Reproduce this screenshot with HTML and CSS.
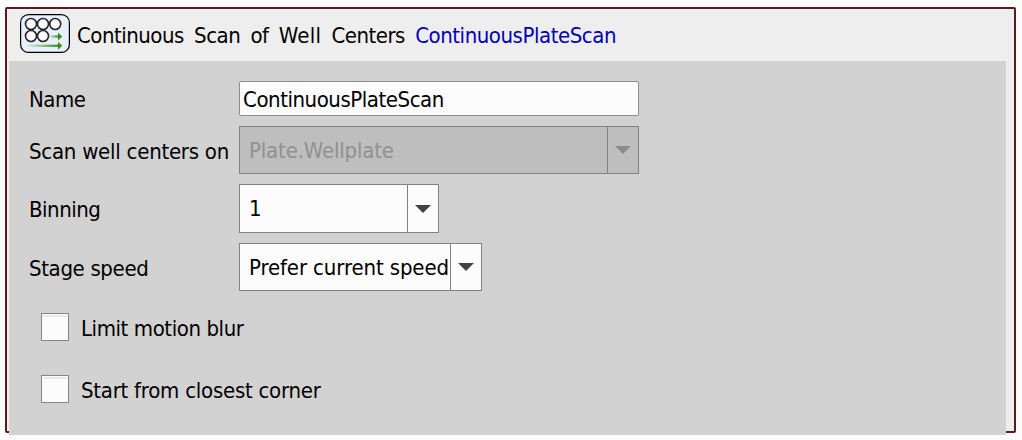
FILE: index.html
```html
<!DOCTYPE html>
<html lang="en">
<head>
<meta charset="utf-8">
<title>Continuous Scan of Well Centers</title>
<link rel="stylesheet" href="styles.css">
</head>
<body>
<section class="panel">
  <header class="panel-header">
    <svg class="icon" width="50" height="39" viewBox="0 0 50 39">
      <defs>
        <linearGradient id="fade" x1="0" x2="1" y1="0" y2="0">
          <stop offset="0" stop-color="#4a9a20" stop-opacity="0"/>
          <stop offset="1" stop-color="#3f8f18"/>
        </linearGradient>
      </defs>
      <rect x=".6" y=".6" width="48.8" height="37.8" rx="8" fill="#e8effd" stroke="#000" stroke-width="1.2"/>
      <g fill="#fff" stroke="#262626" stroke-width="1.6">
        <circle cx="11" cy="10" r="5.5"/><circle cx="23" cy="10" r="5.5"/><circle cx="35.2" cy="10" r="5.5"/>
        <circle cx="11" cy="22" r="5.5"/><circle cx="23" cy="22" r="5.5"/>
      </g>
      <rect x="28.5" y="21.3" width="10" height="2.4" fill="url(#fade)"/>
      <path d="M38 18.5L42.3 22.5L38 26.5Z" fill="#3f8f18"/>
      <rect x="5" y="30.6" width="34" height="2.4" fill="url(#fade)"/>
      <path d="M38 27.8L42.3 31.8L38 35.8Z" fill="#3f8f18"/>
    </svg>
    <h1 class="title"><span class="kind">Continuous Scan of <span class="well">Well</span> Centers</span> <span class="instance">ContinuousPlateScan</span></h1>
  </header>
  <form class="panel-body">
    <div class="row">
      <label class="label">Name</label>
      <div class="input">ContinuousPlateScan</div>
    </div>
    <div class="row">
      <label class="label label-plate">Scan well centers on</label>
      <div class="combo plate disabled"><span class="value">Plate.Wellplate</span><span class="drop"><svg width="16" height="8" viewBox="0 0 16 8"><path d="M0 0H16L8 8Z"/></svg></span></div>
    </div>
    <div class="row">
      <label class="label">Binning</label>
      <div class="combo binning"><span class="value">1</span><span class="drop"><svg width="16" height="8" viewBox="0 0 16 8"><path d="M0 0H16L8 8Z"/></svg></span></div>
    </div>
    <div class="row">
      <label class="label label-speed">Stage speed</label>
      <div class="combo speed"><span class="value">Prefer current speed</span><span class="drop"><svg width="16" height="8" viewBox="0 0 16 8"><path d="M0 0H16L8 8Z"/></svg></span></div>
    </div>
    <div class="check"><span class="box"></span><span class="check-text blur">Limit motion blur</span></div>
    <div class="check"><span class="box"></span><span class="check-text corner">Start from closest corner</span></div>
  </form>
</section>
</body>
</html>
```
FILE: styles.css
```css
* { box-sizing: border-box; }
body {
  margin: 0;
  padding: 7px 6px 0 5px;
  height: 440px;
  overflow: hidden;
  background: #fcfcfc;
  color: #000;
  font: 22px/28px "DejaVu Sans Condensed", "DejaVu Sans", sans-serif;
  font-stretch: condensed;
  letter-spacing: -0.5px;
  white-space: nowrap;
}
.panel {
  height: 426px;
  border: 2px solid #5a1a1e;
  border-radius: 2px;
  background: #eee;
}
.panel-header {
  display: flex;
  height: 52px;
  padding: 5px 0 0 13px;
  gap: 7px;
}
.icon { flex: none; display: block; }
.title {
  margin: 0;
  padding-top: 8px;
  font: inherit;
  word-spacing: 4.5px;
}
.well { letter-spacing: 0.2px; }
.instance { color: #0000b4; letter-spacing: -0.45px; }
.panel-body {
  width: 997px;
  height: 374px;
  margin-left: 2px;
  padding: 20px 0 0 20px;
  background: #d2d2d2;
}
.row {
  display: grid;
  grid-template-columns: 210px max-content;
  margin-bottom: 10px;
  align-items: center;
}
.label { padding-top: 2px; }
.label-plate { padding-top: 4px; letter-spacing: -0.25px; }
.label-speed { padding-top: 4px; letter-spacing: -0.35px; }
.input {
  width: 400px;
  height: 35px;
  padding: 4px 3px;
  border: 1px solid #8e8e8e;
  border-radius: 2px;
  background: #fcfcfc;
  letter-spacing: -0.45px;
}
.combo {
  display: grid;
  grid-template-columns: 1fr 32px;
  height: 48px;
  border: 1px solid #828282;
  background: #fcfcfc;
}
.combo { grid-template-columns: 1fr 31px; }
.value { padding: 10px 0 0 9px; }
.drop {
  display: flex;
  align-items: center;
  justify-content: center;
  border-left: 1px solid #828282;
  fill: #424242;
}
.drop svg { display: block; }
.plate { width: 400px; letter-spacing: -0.17px; }
.binning { width: 200px; height: 49px; }
.speed { width: 243px; letter-spacing: -0.12px; }
.disabled { background: #bebebe; color: #919191; }
.disabled .drop { fill: #8c8c8c; }
.check {
  display: flex;
  align-items: center;
  gap: 12px;
  height: 28px;
  margin: 22px 0 0 12px;
}
.check + .check { margin-top: 34px; }
.box {
  width: 28px;
  height: 28px;
  border: 1px solid #858585;
  background: linear-gradient(#e9e9e9, #e9e9e9) center 1px / 24px 2px no-repeat #fcfcfc;
}
.check-text { padding-top: 4px; }
.blur { letter-spacing: -0.42px; }
.corner { letter-spacing: -0.25px; }
```
